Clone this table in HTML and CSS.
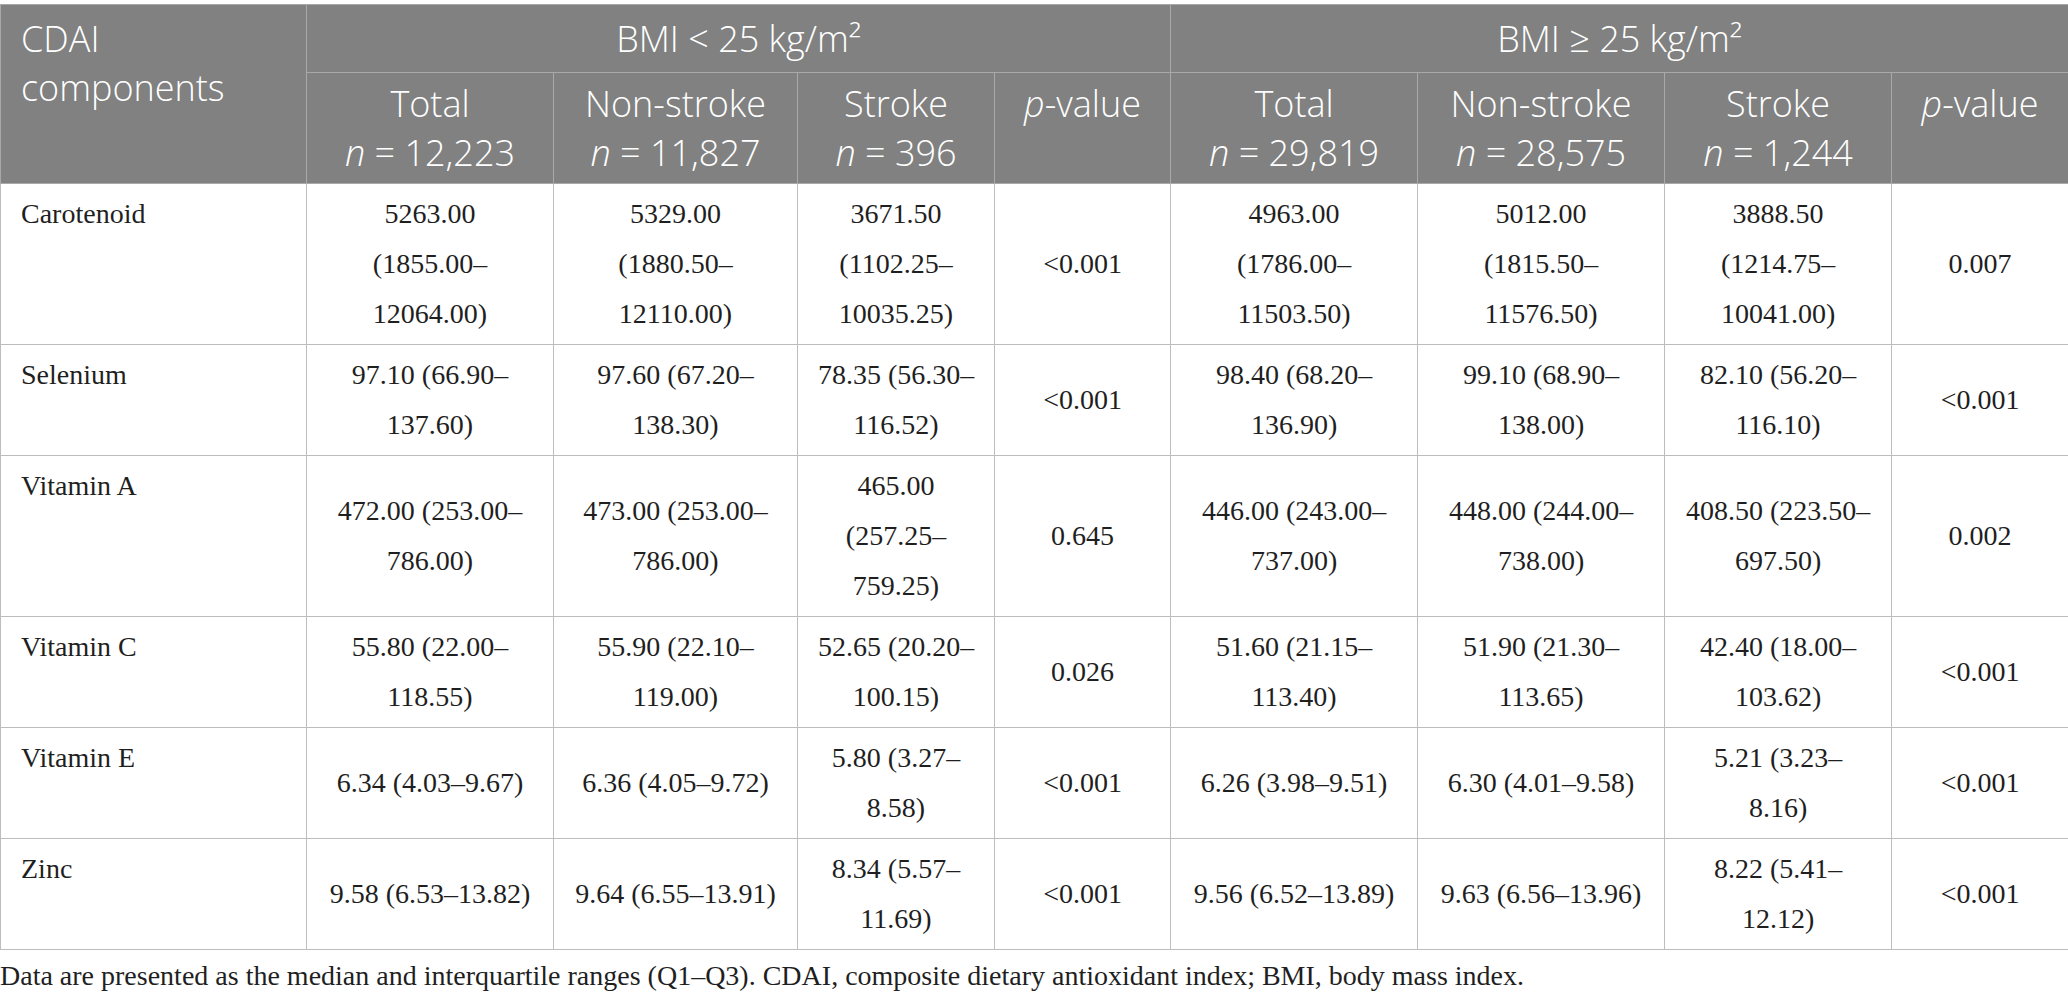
FILE: index.html
```html
<!DOCTYPE html>
<html lang="en">
<head>
    <meta charset="UTF-8">
    <meta name="viewport" content="width=device-width, initial-scale=1.0">
    <title>CDAI components by BMI</title>
    <link rel="stylesheet" href="styles.css">
</head>
<body>
    <table class="stats">
        <colgroup>
            <col class="c-label">
            <col class="c-total">
            <col class="c-non">
            <col class="c-stroke">
            <col class="c-p">
            <col class="c-total">
            <col class="c-total">
            <col class="c-stroke2">
            <col class="c-p2">
        </colgroup>
        <thead>
            <tr>
                <th class="label" rowspan="2">CDAI<br>components</th>
                <th colspan="4">BMI &lt; 25 kg/m²</th>
                <th colspan="4">BMI ≥ 25 kg/m²</th>
            </tr>
            <tr class="sub">
                <th>Total<br><i>n</i> = 12,223</th>
                <th>Non-stroke<br><i>n</i> = 11,827</th>
                <th>Stroke<br><i>n</i> = 396</th>
                <th><i>p</i>-value</th>
                <th>Total<br><i>n</i> = 29,819</th>
                <th>Non-stroke<br><i>n</i> = 28,575</th>
                <th>Stroke<br><i>n</i> = 1,244</th>
                <th><i>p</i>-value</th>
            </tr>
        </thead>
        <tbody>
            <tr>
                <td class="label">Carotenoid</td>
                <td>5263.00<br>(1855.00–<br>12064.00)</td>
                <td>5329.00<br>(1880.50–<br>12110.00)</td>
                <td>3671.50<br>(1102.25–<br>10035.25)</td>
                <td>&lt;0.001</td>
                <td>4963.00<br>(1786.00–<br>11503.50)</td>
                <td>5012.00<br>(1815.50–<br>11576.50)</td>
                <td>3888.50<br>(1214.75–<br>10041.00)</td>
                <td>0.007</td>
            </tr>
            <tr>
                <td class="label">Selenium</td>
                <td>97.10 (66.90–<br>137.60)</td>
                <td>97.60 (67.20–<br>138.30)</td>
                <td>78.35 (56.30–<br>116.52)</td>
                <td>&lt;0.001</td>
                <td>98.40 (68.20–<br>136.90)</td>
                <td>99.10 (68.90–<br>138.00)</td>
                <td>82.10 (56.20–<br>116.10)</td>
                <td>&lt;0.001</td>
            </tr>
            <tr>
                <td class="label">Vitamin A</td>
                <td>472.00 (253.00–<br>786.00)</td>
                <td>473.00 (253.00–<br>786.00)</td>
                <td>465.00<br>(257.25–<br>759.25)</td>
                <td>0.645</td>
                <td>446.00 (243.00–<br>737.00)</td>
                <td>448.00 (244.00–<br>738.00)</td>
                <td>408.50 (223.50–<br>697.50)</td>
                <td>0.002</td>
            </tr>
            <tr>
                <td class="label">Vitamin C</td>
                <td>55.80 (22.00–<br>118.55)</td>
                <td>55.90 (22.10–<br>119.00)</td>
                <td>52.65 (20.20–<br>100.15)</td>
                <td>0.026</td>
                <td>51.60 (21.15–<br>113.40)</td>
                <td>51.90 (21.30–<br>113.65)</td>
                <td>42.40 (18.00–<br>103.62)</td>
                <td>&lt;0.001</td>
            </tr>
            <tr>
                <td class="label">Vitamin E</td>
                <td>6.34 (4.03–9.67)</td>
                <td>6.36 (4.05–9.72)</td>
                <td>5.80 (3.27–<br>8.58)</td>
                <td>&lt;0.001</td>
                <td>6.26 (3.98–9.51)</td>
                <td>6.30 (4.01–9.58)</td>
                <td>5.21 (3.23–<br>8.16)</td>
                <td>&lt;0.001</td>
            </tr>
            <tr>
                <td class="label">Zinc</td>
                <td>9.58 (6.53–13.82)</td>
                <td>9.64 (6.55–13.91)</td>
                <td>8.34 (5.57–<br>11.69)</td>
                <td>&lt;0.001</td>
                <td>9.56 (6.52–13.89)</td>
                <td>9.63 (6.56–13.96)</td>
                <td>8.22 (5.41–<br>12.12)</td>
                <td>&lt;0.001</td>
            </tr>
        </tbody>
    </table>
    <p class="note">Data are presented as the median and interquartile ranges (Q1–Q3). CDAI, composite dietary antioxidant index; BMI, body mass index.</p>
</body>
</html>
```

FILE: styles.css
```css
body {
    margin: 0;
    background: #fff;
    color: #1f1f1f;
    font-family: "Liberation Serif", "Times New Roman", serif;
}
.stats {
    width: 2068px;
    margin-top: 4px;
    border-collapse: collapse;
    table-layout: fixed;
}
.c-label { width: 306px; }
.c-total { width: 247px; }
.c-non { width: 244px; }
.c-stroke { width: 197px; }
.c-p { width: 176px; }
.c-stroke2 { width: 227px; }
.c-p2 { width: 177px; }
th {
    background-color: #808180;
    color: #fff;
    font-family: "Open Sans", "Noto Sans", sans-serif;
    font-weight: 300;
    font-size: 36px;
    line-height: 49px;
    padding: 9px 20px;
    text-align: center;
    vertical-align: top;
    border: 1px solid #a8a9a8;
    white-space: nowrap;
}
.sub th {
    padding: 6px 20px;
}
th.label {
    text-align: left;
}
td {
    font-size: 28px;
    line-height: 50px;
    padding: 5px 20px;
    text-align: center;
    vertical-align: middle;
    border: 1px solid #bdbdbd;
    white-space: nowrap;
}
td.label {
    text-align: left;
    vertical-align: top;
}
.note {
    margin: 1px 0 0;
    font-size: 28px;
    line-height: 50px;
}
```
